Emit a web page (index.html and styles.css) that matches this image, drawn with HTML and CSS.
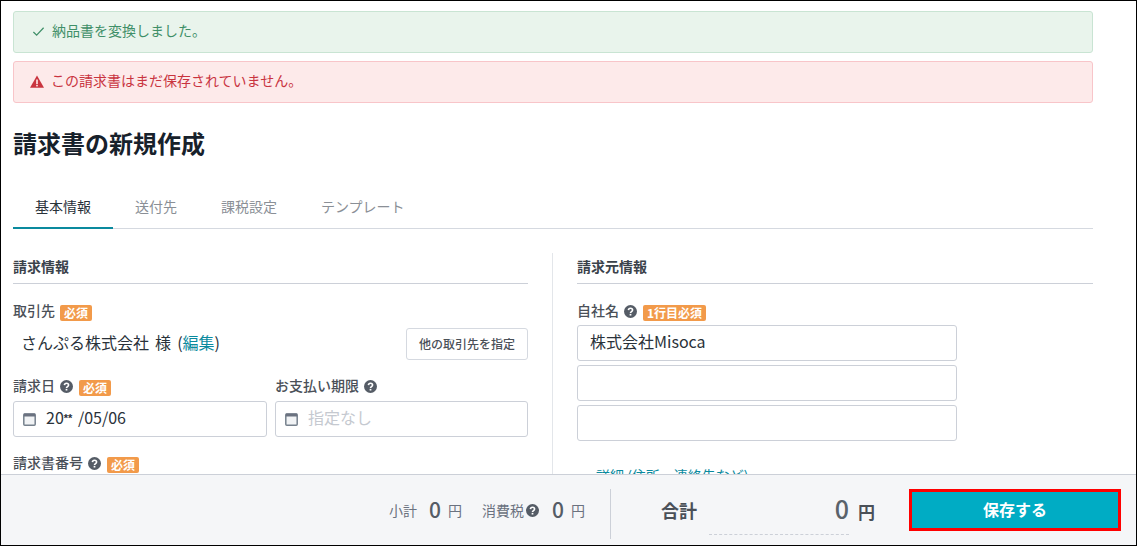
FILE: index.html
```html
<!DOCTYPE html>
<html lang="ja">
<head>
<meta charset="utf-8">
<title>請求書の新規作成</title>
<link rel="stylesheet" href="styles.css">
</head>
<body>
<svg class="defs" width="0" height="0" aria-hidden="true">
  <symbol id="help" viewBox="0 0 12 12"><circle cx="6" cy="6" r="6" fill="#555c66"/><path d="M4.1 4.7C4.2 3.5 5 3 6 3c1.100 0 1.900.6 1.900 1.600 0 1.500-1.900 1.400-1.900 2.800" fill="none" stroke="#fff" stroke-width="1.500"/><rect x="5.200" y="8.200" width="1.600" height="1.500" fill="#fff"/></symbol>
  <symbol id="cal" viewBox="0 0 13 14"><rect x=".8" y="2" width="11.400" height="11.200" rx="1" fill="#f1f3f5" stroke="#76818d" stroke-width="1.500"/><path d="M.8 1.500h11.400v3H.8z" fill="#6b7280"/></symbol>
</svg>
<div class="app">
  <main class="main">
    <div class="alert alert-ok">
      <svg class="alert-icon check" viewBox="0 0 14 14" width="13" height="13"><path d="M1.500 7.500l3.500 3.500 7.500-8" fill="none" stroke="#3f8f68" stroke-width="1.300"/></svg>
      <span>納品書を変換しました。</span>
    </div>
    <div class="alert alert-warn">
      <svg class="alert-icon" viewBox="0 0 14 13" width="14" height="13"><path d="M7 .5L14 12.800H0z" fill="#c9343f"/><rect x="6.200" y="4.500" width="1.600" height="4.500" fill="#fdeaea"/><rect x="6.200" y="9.800" width="1.600" height="1.600" fill="#fdeaea"/></svg>
      <span>この請求書はまだ保存されていません。</span>
    </div>
    <h1 class="title">請求書の新規作成</h1>
    <nav class="tabs">
      <a class="tab tab-active">基本情報</a>
      <a class="tab">送付先</a>
      <a class="tab">課税設定</a>
      <a class="tab">テンプレート</a>
    </nav>
    <div class="columns">
      <section class="col col-left">
        <h2 class="section-title">請求情報</h2>
        <div class="label first"><span>取引先</span><span class="badge">必須</span></div>
        <div class="client">
          <div class="client-name">さんぷる株式会社 様 (<a class="link">編集</a>)</div>
          <button class="btn-other" type="button">他の取引先を指定</button>
        </div>
        <div class="date-row">
          <div class="date-field">
            <div class="label"><span>請求日</span><svg class="help"><use href="#help"/></svg><span class="badge">必須</span></div>
            <div class="input"><svg class="cal"><use href="#cal"/></svg><span>20<span class="stars">**</span> /05/06</span></div>
          </div>
          <div class="date-field">
            <div class="label"><span>お支払い期限</span><svg class="help"><use href="#help"/></svg></div>
            <div class="input placeholder"><svg class="cal"><use href="#cal"/></svg><span>指定なし</span></div>
          </div>
        </div>
        <div class="label number"><span>請求書番号</span><svg class="help"><use href="#help"/></svg><span class="badge">必須</span></div>
      </section>
      <section class="col col-right">
        <h2 class="section-title">請求元情報</h2>
        <div class="label first"><span>自社名</span><svg class="help"><use href="#help"/></svg><span class="badge">1行目必須</span></div>
        <div class="company-inputs">
          <div class="input text">株式会社Misoca</div>
          <div class="input text"></div>
          <div class="input text"></div>
        </div>
        <a class="link details"><span class="caret">▸</span>詳細 (住所、連絡先など)</a>
      </section>
    </div>
  </main>
  <footer class="footer">
    <div class="subtotals">
      <span class="sub-label">小計</span><span class="sub-num">0</span><span class="sub-unit">円</span>
      <span class="sub-label tax">消費税</span><svg class="help tax-help"><use href="#help"/></svg><span class="sub-num">0</span><span class="sub-unit">円</span>
    </div>
    <div class="total">
      <span class="total-label">合計</span>
      <span class="total-value"><span class="total-num">0</span><span class="total-unit">円</span></span>
    </div>
    <button class="save" type="button">保存する</button>
  </footer>
</div>
</body>
</html>
```
FILE: styles.css
```css
* { box-sizing: border-box; }
html, body { margin: 0; height: 100%; }
body {
  font-family: "Noto Sans CJK JP", "Noto Sans", sans-serif;
  color: #1f2933;
  background: #fff;
  overflow: hidden;
}
.defs { position: absolute; }
.app {
  height: 546px;
  border: 1px solid #000;
  display: flex;
  flex-direction: column;
  overflow: hidden;
}
.main {
  flex: 1;
  min-height: 0;
  overflow: hidden;
  padding: 10px 43px 0 12px;
}
.alert {
  height: 42px;
  border: 1px solid;
  border-radius: 3px;
  display: flex;
  align-items: center;
  padding: 0 0 4px 16px;
  font-size: 14px;
  margin-bottom: 8px;
}
.alert-icon { margin: 3px 7px 0 0; flex: none; }
.alert-icon.check { margin-left: 2px; }
.alert-ok { background: #e9f4ec; border-color: #c9e4d3; color: #3f8f68; }
.alert-warn { background: #fdeaea; border-color: #f8c5c9; color: #c9343f; }
.title {
  margin: 24px 0 0;
  font-size: 24px;
  line-height: 32px;
  font-weight: 700;
  color: #17212b;
}
.tabs {
  display: flex;
  margin-top: 28px;
  height: 42px;
  border-bottom: 1px solid #d5d9e0;
}
.tab {
  padding: 0 22px;
  font-size: 14px;
  line-height: 38px;
  color: #8a8f96;
  height: 42px;
}
.tab-active { color: #2a323a; border-bottom: 2px solid #0a8a9e; }
.columns { display: flex; margin-top: 24px; }
.col { flex: none; }
.col-left { width: 515px; }
.col-right {
  width: 541px;
  margin-left: 24px;
  padding-left: 24px;
  border-left: 1px solid #e3e6ea;
}
.section-title {
  margin: 0;
  height: 31px;
  padding-top: 3px;
  font-size: 14px;
  line-height: 20px;
  font-weight: 700;
  color: #3a424a;
  border-bottom: 1px solid #ccd0d8;
}
.label {
  display: flex;
  align-items: center;
  font-size: 14px;
  line-height: 20px;
  height: 20px;
  color: #4a5058;
  font-weight: 500;
}
.label > span:first-child { margin-bottom: 2px; }
.label.first { margin-top: 17px; }
.badge {
  margin: 3px 0 0 5px;
  background: #f29a4a;
  color: #fff;
  font-size: 12px;
  font-weight: 700;
  line-height: 16px;
  height: 16px;
  padding: 0 4px;
  border-radius: 2px;
}
.help { width: 13px; height: 13px; margin-left: 5px; flex: none; }
.help + .badge { margin-left: 6px; }
.client {
  display: flex;
  justify-content: space-between;
  align-items: flex-start;
  margin-top: 7px;
  height: 32px;
}
.client-name { font-size: 16px; line-height: 28px; padding-left: 8px; color: #2a323a; word-spacing: 2.5px; }
.link { color: #0a8a9e; }
.btn-other {
  width: 122px;
  height: 32px;
  background: #fff;
  border: 1px solid #d5d9e0;
  border-radius: 3px;
  font: 500 12px "Noto Sans CJK JP", sans-serif;
  color: #4a5058;
  padding: 0 0 2px;
}
.date-row { display: flex; gap: 8px; margin-top: 16px; }
.date-field { width: 254px; }
.date-field:last-child { width: 253px; }
.input {
  height: 36px;
  margin-top: 5px;
  border: 1px solid #ccd0d8;
  border-radius: 3px;
  display: flex;
  align-items: center;
  padding: 0 0 5px 9px;
  font-size: 16px;
  color: #2a323a;
  background: #fff;
}
.placeholder { color: #c5c9d0; }
.cal { width: 13px; height: 14px; margin: 4px 10px 0 0; flex: none; }
.stars { font: 700 11px "Liberation Sans", sans-serif; vertical-align: 2px; margin-right: 2px; }
.label.number { margin-top: 16px; }
.company-inputs { width: 380px; margin-top: 4px; }
.company-inputs .input { margin-top: 4px; }
.company-inputs .input:first-child { margin-top: 0; }
.input.text { padding-left: 12px; }
.details { display: block; margin-top: 24px; font-size: 14px; line-height: 20px; }
.caret { font-size: 10px; margin: 0 11px 0 3px; color: #6b7280; }
.footer {
  flex: none;
  height: 71px;
  background: #f5f6f8;
  border-top: 1px solid #ccd0d8;
  display: flex;
  align-items: flex-start;
  padding: 14px 15px 0 0;
}
.subtotals {
  flex: 1;
  display: flex;
  justify-content: flex-end;
  align-items: center;
  height: 50px;
  padding: 0 25px 8px 0;
  border-right: 1px solid #ccd0d8;
  color: #6b7280;
}
.sub-label { font-size: 14px; }
.sub-num { font-size: 21px; font-weight: 500; margin: 0 0 2px 12px; color: #555c66; line-height: 24px; }
.sub-unit { font-size: 14px; margin-left: 7px; }
.tax { margin-left: 20px; }
.tax-help { margin-left: 2px; }
.tax-help + .sub-num { margin-left: 13px; }
.total {
  width: 298px;
  position: relative;
  display: flex;
  justify-content: space-between;
  align-items: center;
  height: 42px;
  padding: 0 34px 0 50px;
}
.total::after {
  content: "";
  position: absolute;
  left: 98px;
  bottom: -4px;
  width: 140px;
  border-bottom: 1px dashed #ccd0d8;
}
.total-label { font-size: 18px; font-weight: 700; color: #4a5058; }
.total-value { padding-bottom: 4px; }
.total-num { font-size: 25px; font-weight: 500; color: #5a626a; }
.total-unit { font-size: 17px; font-weight: 700; margin-left: 9px; color: #4a5058; }
.save {
  width: 212px;
  height: 42px;
  background: #00acc4;
  border: 3px solid #f00;
  color: #fff;
  font: 700 16px "Noto Sans CJK JP", sans-serif;
  padding: 0 0 2px;
}
```
